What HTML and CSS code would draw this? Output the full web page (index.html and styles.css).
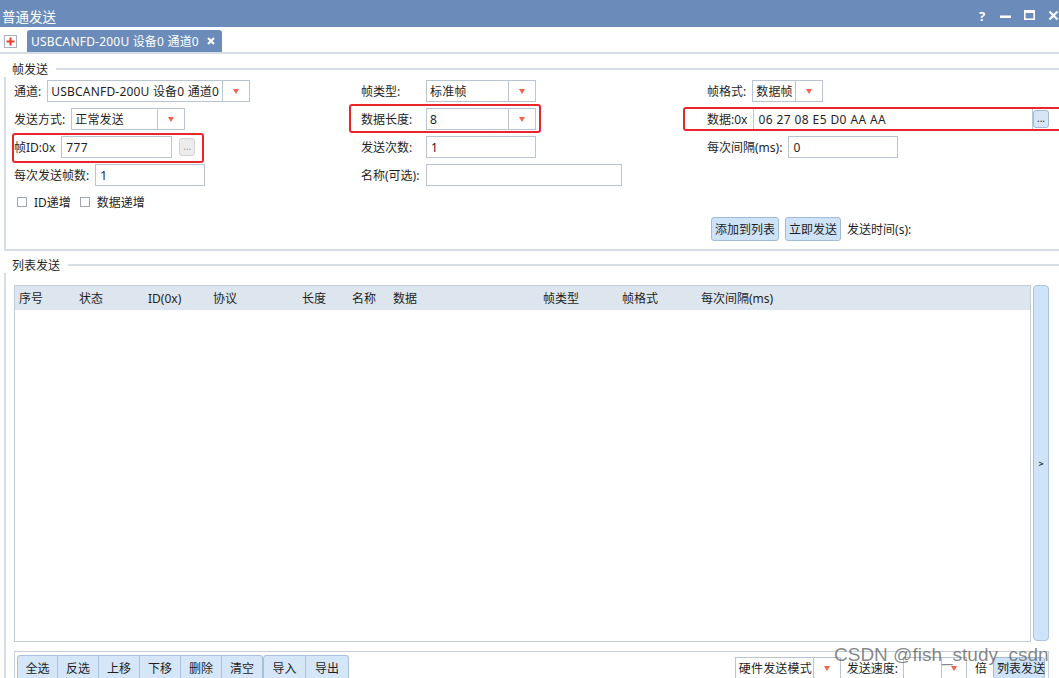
FILE: index.html
```html
<!DOCTYPE html>
<html lang="zh-CN">
<head>
  <meta charset="UTF-8">
  <title>普通发送</title>
  <link rel="stylesheet" href="styles.css">
</head>
<body>
  <div class="window">
    <!-- Title bar -->
    <header class="titlebar">
      <span class="title">普通发送</span>
      <div class="win-btns">
        <span class="win-help">?</span>
        <svg width="11" height="11" viewBox="0 0 11 11"><rect x="0" y="5.5" width="11" height="2.5" fill="#fff"/></svg>
        <svg width="11" height="11" viewBox="0 0 11 11"><rect x="0.8" y="0.8" width="9.4" height="8.4" fill="none" stroke="#fff" stroke-width="1.6"/><rect x="0" y="0" width="11" height="3" fill="#fff"/></svg>
        <svg width="11" height="11" viewBox="0 0 11 11"><path d="M1.5 1.5l8 8M9.5 1.5l-8 8" stroke="#fff" stroke-width="2.2"/></svg>
      </div>
    </header>

    <!-- Tabs -->
    <div class="tabbar">
      <svg class="tab-add" width="13" height="13" viewBox="0 0 13 13"><rect x="0.5" y="0.5" width="12" height="12" fill="#fff" stroke="#aab4c0"/><path d="M6.5 2.5v8M2.5 6.5h8" stroke="#e8402f" stroke-width="2"/></svg>
      <div class="tab">
        <span>USBCANFD-200U 设备0 通道0</span>
        <svg class="tab-close" width="8" height="8" viewBox="0 0 8 8"><path d="M1 1l6 6M7 1l-6 6" stroke="#fff" stroke-width="2"/></svg>
      </div>
    </div>

    <!-- Frame send -->
    <section class="group">
      <div class="group-title"><span>帧发送</span></div>
      <div class="group-body frame-form">
        <div class="cell">
          <span>通道:</span>
          <div class="combo w-channel"><span class="combo-text">USBCANFD-200U 设备0 通道0</span><span class="combo-arrow"></span></div>
        </div>
        <div class="cell">
          <span class="lbl-fixed">帧类型:</span>
          <div class="combo w-110"><span class="combo-text">标准帧</span><span class="combo-arrow"></span></div>
        </div>
        <div class="cell">
          <span>帧格式:</span>
          <div class="combo w-fmt"><span class="combo-text">数据帧</span><span class="combo-arrow"></span></div>
        </div>

        <div class="cell">
          <span>发送方式:</span>
          <div class="combo w-mode"><span class="combo-text">正常发送</span><span class="combo-arrow"></span></div>
        </div>
        <div class="cell">
          <div class="field hl hl-len">
            <span class="lbl-fixed">数据长度:</span>
            <div class="combo w-110"><span class="combo-text">8</span><span class="combo-arrow"></span></div>
          </div>
        </div>
        <div class="cell">
          <div class="field field-wide hl hl-data">
            <span>数据:0x</span>
            <div class="input input-wide">06 27 08 E5 D0 AA AA</div>
            <span class="dots-btn">...</span>
          </div>
        </div>

        <div class="cell">
          <div class="field hl hl-id">
            <span>帧ID:0x</span>
            <div class="input w-111">777</div>
            <span class="dots-btn disabled">...</span>
          </div>
        </div>
        <div class="cell">
          <span class="lbl-fixed">发送次数:</span>
          <div class="input w-110">1</div>
        </div>
        <div class="cell">
          <span>每次间隔(ms):</span>
          <div class="input w-110">0</div>
        </div>

        <div class="cell">
          <span>每次发送帧数:</span>
          <div class="input w-110">1</div>
        </div>
        <div class="cell">
          <span class="lbl-fixed">名称(可选):</span>
          <div class="input w-name"></div>
        </div>
        <div class="cell"></div>

        <div class="cell checks">
          <label class="check"><span class="check-box"></span>ID递增</label>
          <label class="check"><span class="check-box"></span>数据递增</label>
        </div>

        <div class="cell actions">
          <button class="btn">添加到列表</button>
          <button class="btn">立即发送</button>
          <span>发送时间(s):</span>
        </div>
      </div>
    </section>

    <!-- List send -->
    <section class="group list-group">
      <div class="group-title"><span>列表发送</span></div>
      <div class="group-body list-body">
        <div class="list-wrap">
          <div class="list-table">
            <div class="list-head">
              <span class="c-no">序号</span>
              <span class="c-state">状态</span>
              <span class="c-id">ID(0x)</span>
              <span class="c-proto">协议</span>
              <span class="c-len">长度</span>
              <span class="c-name">名称</span>
              <span class="c-data">数据</span>
              <span class="c-type">帧类型</span>
              <span class="c-fmt">帧格式</span>
              <span>每次间隔(ms)</span>
            </div>
          </div>
          <div class="side-toggle">&gt;</div>
        </div>

        <div class="toolbar">
          <div class="btn-group">
            <button>全选</button>
            <button>反选</button>
            <button>上移</button>
            <button>下移</button>
            <button>删除</button>
            <button>清空</button>
          </div>
          <div class="btn-group io">
            <button>导入</button>
            <button>导出</button>
          </div>
          <div class="toolbar-right">
            <div class="combo w-hw"><span class="combo-text">硬件发送模式</span><span class="combo-arrow"></span></div>
            <span class="speed-lbl">发送速度:</span>
            <div class="combo w-speed"><span class="combo-text"></span><span class="combo-arrow"></span></div>
            <span class="times">倍</span>
            <button class="btn list-send">列表发送</button>
          </div>
        </div>
      </div>
    </section>

    <div class="watermark">CSDN @fish_study_csdn</div>
  </div>
</body>
</html>
```

FILE: styles.css
```css
/* Global */
* {
  box-sizing: border-box;
}

html, body {
  margin: 0;
  height: 100%;
}

body {
  font-family: "Noto Sans", "Noto Sans CJK SC", sans-serif;
  font-size: 12px;
  color: #1f1f1f;
  background: #fff;
  overflow: hidden;
}

.window {
  position: relative;
  width: 1059px;
  height: 678px;
  overflow: hidden;
}

/* Title bar */
.titlebar {
  height: 27px;
  padding: 4px 0 0 2px;
  background: #6b8cba;
  color: #fff;
  display: flex;
  align-items: center;
  justify-content: space-between;
}

.title {
  font-size: 13.5px;
}

.win-btns {
  display: flex;
  align-items: center;
  gap: 13px;
}

.win-help {
  width: 8px;
  font-weight: bold;
  font-size: 13px;
}

/* Tabs */
.tabbar {
  height: 27px;
  padding-left: 4px;
  display: flex;
  align-items: flex-end;
  gap: 10px;
  border-bottom: 2px solid #d6dde6;
}

.tab-add {
  margin-bottom: 4px;
}

.tab {
  height: 22px;
  padding: 0 7px 0 4px;
  background: #6b8cba;
  color: #fff;
  border-radius: 3px 3px 0 0;
  display: flex;
  align-items: center;
  gap: 8px;
  letter-spacing: 0.2px;
}

/* Group boxes */
.group-title {
  height: 16px;
  margin-top: 7px;
  padding-left: 12px;
  display: flex;
  align-items: center;
}

.group-title::after {
  content: "";
  flex: 1;
  margin-left: 8px;
  border-top: 2px solid #d6dde6;
}

.group-body {
  margin-left: 4px;
  border-left: 2px solid #d6dde6;
}

.frame-form {
  display: grid;
  grid-template-columns: 347px 346px 1fr;
  grid-template-rows: repeat(4, 28px) 26px 28px;
  padding: 0 10px 6px 8px;
  border-bottom: 2px solid #d6dde6;
}

.cell {
  display: flex;
  align-items: center;
  gap: 6px;
  white-space: nowrap;
}

.lbl-fixed {
  width: 65px;
  margin-right: -6px;
}

.field {
  display: flex;
  align-items: center;
  gap: 6px;
}

.field-wide {
  flex: 1;
}

/* Red markers */
.hl {
  position: relative;
}

.hl::after {
  content: "";
  position: absolute;
  border: 2.5px solid #e8262b;
  border-radius: 3px;
  pointer-events: none;
}

.hl-id::after {
  left: -2px;
  right: -9px;
  top: -3px;
  bottom: -5px;
}

.hl-len::after {
  left: -12px;
  right: -5px;
  top: -4px;
  bottom: -3px;
}

.hl-data::after {
  left: -24px;
  right: -16px;
  top: -1px;
  bottom: -1px;
  border-width: 2px;
}

/* Inputs */
.input,
.combo {
  height: 22px;
  border: 1px solid #b9c5d2;
  background: #fff;
  display: flex;
  align-items: center;
}

.input {
  padding-left: 4px;
  letter-spacing: 0.4px;
}

.combo-text {
  flex: 1;
  padding-left: 3px;
  overflow: hidden;
  letter-spacing: 0.2px;
}

.combo-arrow {
  width: 27px;
  align-self: stretch;
  border-left: 1px solid #b9c5d2;
  display: flex;
  align-items: center;
  justify-content: center;
}

.combo-arrow::before {
  content: "";
  border-left: 3.5px solid transparent;
  border-right: 3.5px solid transparent;
  border-top: 5px solid #f2644f;
}

.w-channel { width: 203px; }
.w-mode { width: 114px; }
.w-fmt { width: 71px; }
.w-110 { width: 110px; }
.w-111 { width: 111px; }
.w-name { width: 196px; }
.w-hw { width: 106px; }
.w-speed { width: 64px; }
.w-speed .combo-arrow { width: 25px; }

.input-wide {
  flex: 1;
}

.dots-btn {
  width: 16px;
  height: 18px;
  margin-left: -6px;
  border: 1px solid #9fbad6;
  border-radius: 3px;
  background: #d6e6f7;
  font-size: 10px;
  line-height: 14px;
  text-align: center;
}

.dots-btn.disabled {
  margin-left: 1px;
  border-color: #d3d3d3;
  background: #ececec;
  color: #999;
}

/* Checkboxes */
.checks {
  grid-column: 1 / 4;
  padding-left: 3px;
  gap: 9px;
}

.check {
  display: flex;
  align-items: center;
  gap: 7px;
}

.check-box {
  width: 10px;
  height: 10px;
  border: 1px solid #9ea7b1;
  background: #fff;
}

/* Buttons */
.actions {
  grid-column: 3;
  padding-left: 4px;
}

.btn {
  height: 24px;
  padding: 0 3px;
  border: 1px solid #9fbcdb;
  border-radius: 3px;
  background: #cfe3f8;
  font: inherit;
  color: #1f1f1f;
}

/* List send */
.list-group .group-title {
  margin-top: 6px;
}

.list-body {
  padding: 12px 10px 0 8px;
  height: 420px;
}

.list-wrap {
  display: flex;
  gap: 2px;
  height: 357px;
}

.list-table {
  flex: 1;
  border: 1px solid #c1cddb;
}

.list-head {
  height: 24px;
  padding-left: 4px;
  background: #dde5ee;
  display: flex;
  align-items: center;
  white-space: nowrap;
}

.c-no { width: 60px; }
.c-state { width: 69px; }
.c-id { width: 65px; }
.c-proto { width: 89px; }
.c-len { width: 50px; }
.c-name { width: 41px; }
.c-data { width: 150px; }
.c-type { width: 79px; }
.c-fmt { width: 79px; }

.side-toggle {
  width: 16px;
  height: 356px;
  border: 1px solid #a9c4e0;
  border-radius: 4px;
  background: #cfe4f8;
  display: flex;
  align-items: center;
  justify-content: center;
  font-size: 9px;
  font-weight: bold;
  color: #333;
}

.toolbar {
  height: 40px;
  margin-top: 9px;
  padding: 3px 3px 0 2px;
  border: 1px solid #c5d0dc;
  border-bottom: none;
  display: flex;
  align-items: flex-start;
}

.btn-group {
  display: flex;
}

.btn-group button {
  width: 41px;
  height: 26px;
  padding: 0;
  border: 1px solid #a9c1db;
  background: #d4e6f8;
  font: inherit;
  color: #1f1f1f;
}

.btn-group button + button {
  border-left: none;
}

.btn-group button:first-child {
  border-radius: 3px 0 0 0;
}

.btn-group button:last-child {
  border-radius: 0 3px 0 0;
}

.btn-group.io button {
  width: 43px;
}

.toolbar-right {
  margin-left: auto;
  margin-top: 2px;
  display: flex;
  align-items: center;
  white-space: nowrap;
}

.speed-lbl {
  margin: 0 5px 0 6px;
}

.times {
  margin: 0 6px 0 8px;
}

.list-send {
  height: 22px;
  width: 52px;
}

/* Watermark */
.watermark {
  position: absolute;
  left: 834px;
  top: 644px;
  font-family: "Liberation Sans", Arial, sans-serif;
  font-size: 19px;
  color: rgba(95, 95, 95, 0.75);
  white-space: nowrap;
  pointer-events: none;
}
```
